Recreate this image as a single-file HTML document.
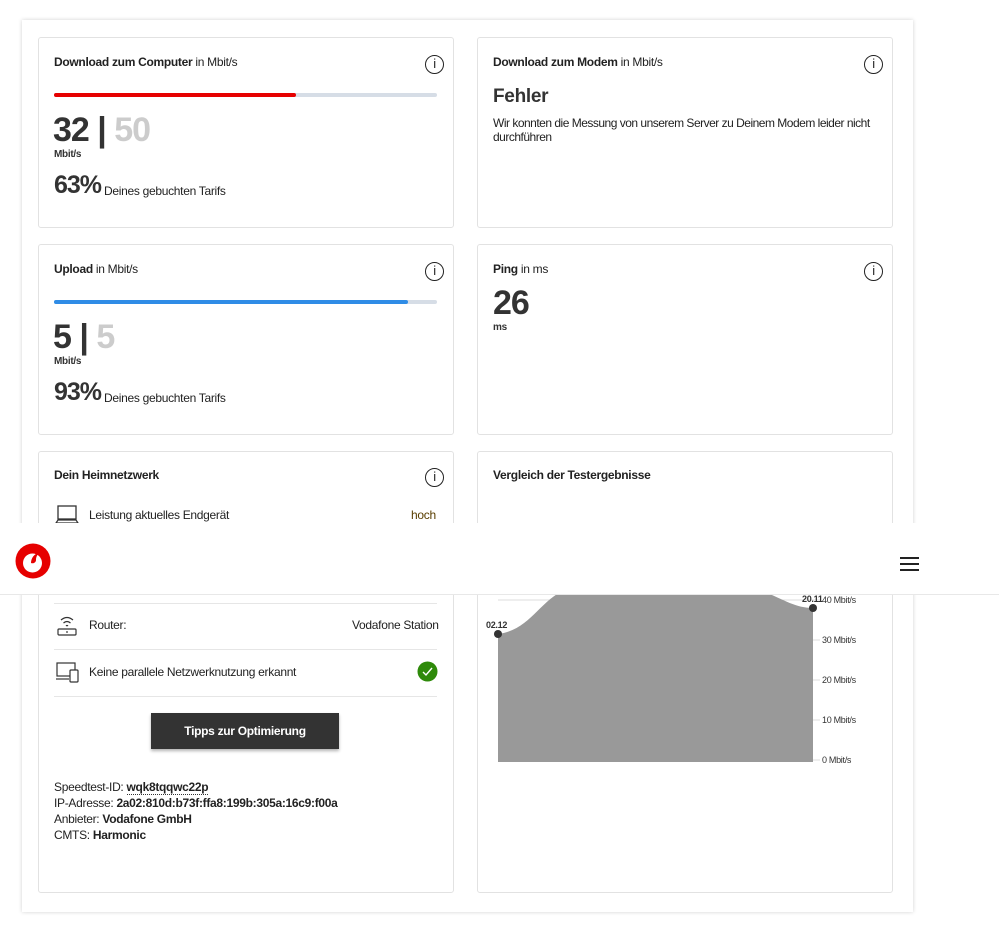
<!DOCTYPE html>
<html><head><meta charset="utf-8"><style>
*{margin:0;padding:0;box-sizing:border-box}
body{width:999px;height:928px;background:#fff;font-family:"Liberation Sans",sans-serif;color:#333;position:relative;overflow:hidden;font-size:12px;letter-spacing:-0.3px}
.outer{position:absolute;left:22px;top:20px;width:891px;height:892px;background:#fff;box-shadow:0 0 4px rgba(0,0,0,.18)}
.card{position:absolute;background:#fff;border:1px solid #e2e2e2;border-radius:3px}
.abs{position:absolute}
.t{font-size:12px;color:#222}
.t b{font-weight:bold}
.info{position:absolute;width:19px;height:19px;border:1.5px solid #222;border-radius:50%;font:13px "Liberation Sans",sans-serif;text-align:center;line-height:16px;color:#222}
.bar{position:absolute;height:4px;border-radius:2px;background:#d6dde6}
.big{font-size:34px;font-weight:bold;color:#333;letter-spacing:-1px}
.sep{position:absolute;height:1px;background:#e6e6e6}
</style></head><body>
<div class="outer"></div>

<div class="card" style="left:38px;top:37px;width:416px;height:191px"></div>
<div class="abs t" style="left:54px;top:55px"><b>Download zum Computer</b> in Mbit/s</div>
<div class="info" style="left:425px;top:55px">i</div>
<div class="bar" style="left:54px;top:93px;width:383px"></div>
<div class="bar" style="left:54px;top:93px;width:242px;background:#e60000"></div>
<div class="abs big" style="left:53px;top:111px">32 <span style="color:#333">|</span> <span style="color:#ccc">50</span></div>
<div class="abs" style="left:54px;top:149px;font-size:10px;font-weight:bold">Mbit/s</div>
<div class="abs" style="left:54px;top:171px;font-size:25px;font-weight:bold;letter-spacing:-1px">63%</div>
<div class="abs t" style="left:104px;top:184px">Deines gebuchten Tarifs</div>

<div class="card" style="left:477px;top:37px;width:416px;height:191px"></div>
<div class="abs t" style="left:493px;top:55px"><b>Download zum Modem</b> in Mbit/s</div>
<div class="info" style="left:864px;top:55px">i</div>
<div class="abs" style="left:493px;top:86px;font-size:19px;font-weight:bold">Fehler</div>
<div class="abs t" style="left:493px;top:116px;width:390px;line-height:14px;letter-spacing:-0.5px">Wir konnten die Messung von unserem Server zu Deinem Modem leider nicht durchführen</div>

<div class="card" style="left:38px;top:244px;width:416px;height:191px"></div>
<div class="abs t" style="left:54px;top:262px"><b>Upload</b> in Mbit/s</div>
<div class="info" style="left:425px;top:262px">i</div>
<div class="bar" style="left:54px;top:300px;width:383px"></div>
<div class="bar" style="left:54px;top:300px;width:354px;background:#2f8ce6"></div>
<div class="abs big" style="left:53px;top:318px">5 | <span style="color:#ccc">5</span></div>
<div class="abs" style="left:54px;top:356px;font-size:10px;font-weight:bold">Mbit/s</div>
<div class="abs" style="left:54px;top:378px;font-size:25px;font-weight:bold;letter-spacing:-1px">93%</div>
<div class="abs t" style="left:104px;top:391px">Deines gebuchten Tarifs</div>

<div class="card" style="left:477px;top:244px;width:416px;height:191px"></div>
<div class="abs t" style="left:493px;top:262px"><b>Ping</b> in ms</div>
<div class="info" style="left:864px;top:262px">i</div>
<div class="abs big" style="left:493px;top:284px">26</div>
<div class="abs" style="left:493px;top:322px;font-size:10px;font-weight:bold">ms</div>

<div class="card" style="left:38px;top:451px;width:416px;height:442px"></div>
<div class="abs t" style="left:54px;top:468px"><b>Dein Heimnetzwerk</b></div>
<div class="info" style="left:425px;top:468px">i</div>
<svg class="abs" style="left:55px;top:504px" width="24" height="22" viewBox="0 0 24 22"><rect x="3" y="2" width="18" height="13" fill="none" stroke="#333" stroke-width="1.3"/><path d="M1 19h22l-2-3H3z" fill="none" stroke="#333" stroke-width="1.2"/></svg>
<div class="abs t" style="left:89px;top:508px">Leistung aktuelles Endgerät</div>
<div class="abs t" style="left:411px;top:508px;color:#5a3e00">hoch</div>
<div class="sep" style="left:54px;top:603px;width:383px"></div>
<svg class="abs" style="left:56px;top:613px" width="22" height="24" viewBox="0 0 22 24"><path d="M5 7q6-5 12 0M7.5 10q3.5-3 7 0M10 13q1-1 2 0" fill="none" stroke="#333" stroke-width="1.2"/><rect x="2" y="16" width="18" height="6" rx="1" fill="none" stroke="#333" stroke-width="1.2"/><circle cx="11" cy="19" r="0.9" fill="#333"/></svg>
<div class="abs t" style="left:89px;top:618px">Router:</div>
<div class="abs t" style="left:352px;top:618px">Vodafone Station</div>
<div class="sep" style="left:54px;top:649px;width:383px"></div>
<svg class="abs" style="left:55px;top:661px" width="26" height="22" viewBox="0 0 26 22"><rect x="2" y="2" width="18" height="13" fill="none" stroke="#333" stroke-width="1.2"/><path d="M1 18h13" stroke="#333" stroke-width="1.2"/><rect x="15" y="9" width="8" height="12" rx="1" fill="#fff" stroke="#333" stroke-width="1.2"/></svg>
<div class="abs t" style="left:89px;top:665px">Keine parallele Netzwerknutzung erkannt</div>
<svg class="abs" style="left:417px;top:661px" width="21" height="21" viewBox="0 0 21 21"><circle cx="10.5" cy="10.5" r="10" fill="#2e8a0a"/><path d="M6 11l3 3 6-7" fill="none" stroke="#fff" stroke-width="1.4"/></svg>
<div class="sep" style="left:54px;top:696px;width:383px"></div>
<div class="abs" style="left:151px;top:713px;width:188px;height:36px;background:#333;color:#fff;font-size:12px;font-weight:bold;text-align:center;line-height:36px;box-shadow:0 2px 3px rgba(0,0,0,.3)">Tipps zur Optimierung</div>
<div class="abs t" style="left:54px;top:779px;line-height:16px">Speedtest-ID: <b style="border-bottom:1px dotted #333">wqk8tqqwc22p</b><br>IP-Adresse: <b>2a02:810d:b73f:ffa8:199b:305a:16c9:f00a</b><br>Anbieter: <b>Vodafone GmbH</b><br>CMTS: <b>Harmonic</b></div>

<div class="card" style="left:477px;top:451px;width:416px;height:442px"></div>
<div class="abs t" style="left:493px;top:468px"><b>Vergleich der Testergebnisse</b></div>
<svg class="abs" style="left:480px;top:590px" width="400" height="180" viewBox="480 590 400 180">
<g stroke="#ddd" stroke-width="1"><path d="M498 600H820M498 640H820M498 680H820M498 720H820M498 760H820"/></g>
<path d="M498 634C530 630 540 600 565 590L760 590C785 600 795 608 813 608L813 762L498 762Z" fill="#999"/>
<circle cx="498" cy="634" r="4" fill="#333"/><circle cx="813" cy="608" r="4" fill="#333"/>
<g font-family="Liberation Sans" font-size="9" fill="#333">
<text x="486" y="628" font-weight="bold">02.12</text>
<text x="802" y="602" font-weight="bold">20.11</text>
<text x="822" y="603">40 Mbit/s</text><text x="822" y="643">30 Mbit/s</text><text x="822" y="683">20 Mbit/s</text><text x="822" y="723">10 Mbit/s</text><text x="822" y="763">0 Mbit/s</text></g>
</svg>

<div class="abs" style="left:0;top:523px;width:999px;height:72px;background:#fff;border-bottom:1px solid #e8e8e8"></div>
<svg class="abs" style="left:15px;top:543px" width="36" height="36" viewBox="0 0 36 36"><circle cx="18" cy="18" r="17.5" fill="#e60000"/><circle cx="17.5" cy="20" r="9.5" fill="#fff"/><path d="M16 20c0-5 3-9 9-11-3 3-4 5-4 8 0 2-2 4-5 3z" fill="#e60000"/></svg>
<div class="abs" style="left:900px;top:557px;width:19px;height:2px;background:#222"></div>
<div class="abs" style="left:900px;top:563px;width:19px;height:2px;background:#222"></div>
<div class="abs" style="left:900px;top:569px;width:19px;height:2px;background:#222"></div>
</body></html>
